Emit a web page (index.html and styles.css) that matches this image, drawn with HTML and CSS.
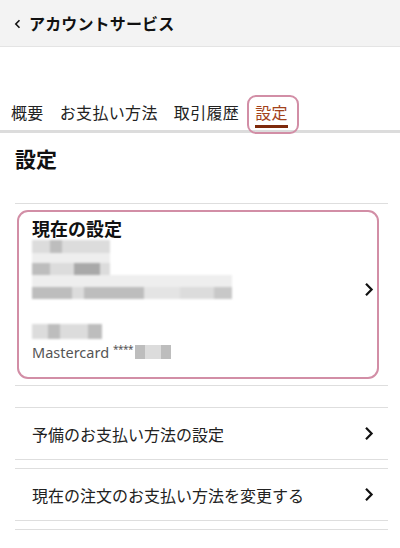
FILE: index.html
```html
<!DOCTYPE html>
<html lang="ja">
<head>
<meta charset="utf-8">
<link rel="stylesheet" href="styles.css">
</head>
<body>
<header class="topbar">
  <svg class="back" width="7" height="10" viewBox="0 0 7 10"><path d="M5.5 1.2 L1.8 5 L5.5 8.8" fill="none" stroke="#111" stroke-width="1.6"/></svg>
  <h1 class="title">アカウントサービス</h1>
</header>

<nav class="tabs">
  <span class="tab">概要</span>
  <span class="tab">お支払い方法</span>
  <span class="tab">取引履歴</span>
  <span class="tab active">設定</span>
</nav>

<h2 class="heading">設定</h2>

<div class="list">
  <section class="block card-block">
    <div class="card">
      <div class="card-body">
        <div class="card-title">現在の設定</div>
        <div class="mosaic">
          <div class="row r1"><span class="c l w18"></span><span class="c m w12"></span><span class="c l w48"></span></div>
          <div class="row r2"><span class="c v w78"></span></div>
          <div class="row r3"><span class="c m w18"></span><span class="c l w24"></span><span class="c d w26"></span><span class="c l w10"></span></div>
          <div class="row r4"><span class="c v w200"></span></div>
          <div class="row r5"><span class="c m w40"></span><span class="c l w12"></span><span class="c m w60"></span><span class="c l2 w36"></span><span class="c l w34"></span><span class="c m2 w18"></span></div>
          <div class="row r6"><span class="c l w16"></span><span class="c m w12"></span><span class="c l w28"></span><span class="c m w14"></span></div>
        </div>
        <div class="card-line">Mastercard <span class="stars">****</span><span class="mask"><span class="c m w10"></span><span class="c l w16"></span><span class="c m w10"></span></span></div>
      </div>
      <svg class="chev" width="10" height="15" viewBox="0 0 10 15"><path d="M2 1.8 L7.6 7.5 L2 13.2" fill="none" stroke="#111" stroke-width="2.2"/></svg>
    </div>
  </section>

  <section class="block item">
    <span class="item-text">予備のお支払い方法の設定</span>
    <svg class="chev" width="10" height="15" viewBox="0 0 10 15"><path d="M2 1.8 L7.6 7.5 L2 13.2" fill="none" stroke="#111" stroke-width="2.2"/></svg>
  </section>

  <section class="block item">
    <span class="item-text">現在の注文のお支払い方法を変更する</span>
    <svg class="chev" width="10" height="15" viewBox="0 0 10 15"><path d="M2 1.8 L7.6 7.5 L2 13.2" fill="none" stroke="#111" stroke-width="2.2"/></svg>
  </section>

  <section class="block item empty"></section>
</div>
</body>
</html>
```

FILE: styles.css
```css
* { box-sizing: border-box; }
html, body { margin: 0; padding: 0; }
body {
  width: 400px;
  height: 548px;
  overflow: hidden;
  background: #fff;
  color: #111;
  font-family: "Noto Sans CJK JP", "Noto Sans", sans-serif;
}

.topbar {
  height: 47px;
  background: #f3f3f3;
  border-bottom: 1px solid #e4e4e4;
  display: flex;
  align-items: center;
  padding-left: 14px;
}
.back { display: block; margin-top: 1px; }
.title {
  margin: 0 0 0 8px;
  font-size: 16px;
  font-weight: 700;
  line-height: 24px;
  letter-spacing: 0.15px;
}

.tabs {
  display: flex;
  gap: 16px;
  padding: 53px 12px 0 11px;
  border-bottom: 3px solid #dcdcdc;
}
.tab {
  position: relative;
  font-size: 16px;
  line-height: 24px;
  letter-spacing: 0.35px;
  padding-bottom: 6px;
  color: #222;
}
.tab.active { color: #a3421b; }
.tab.active::after {
  content: "";
  position: absolute;
  left: 0;
  right: 0;
  bottom: 2px;
  height: 3px;
  background: #7e2a0c;
}
.tab.active::before {
  content: "";
  position: absolute;
  left: -8px;
  right: -11px;
  top: -5px;
  bottom: -4px;
  border: 2px solid #d28ea6;
  border-radius: 9px;
}

.heading {
  margin: 10px 0 0 0;
  padding-left: 15px;
  font-size: 21px;
  font-weight: 700;
  line-height: 30px;
}

.list {
  padding: 0 12px 0 15px;
  margin-top: 30px;
}
.block {
  border-top: 1px solid #dedede;
  border-bottom: 1px solid #dedede;
}
.card-block {
  padding: 6px 9px 6px 2px;
}
.card {
  border: 2px solid #d28ea6;
  border-radius: 11px;
  display: flex;
  align-items: center;
  padding: 4px 3px 14px 13px;
}
.card-body { flex: 1; }
.card-title {
  font-size: 18px;
  font-weight: 700;
  line-height: 24px;
}
.mosaic { filter: blur(0.8px); margin-top: 0; }
.row { display: flex; }
.r1 { height: 13px; }
.r2 { height: 10px; }
.r3 { height: 12px; }
.r4 { height: 12px; }
.r5 { height: 12px; }
.r6 { height: 15px; margin-top: 25px; }
.c { display: block; height: 100%; }
.c.l { background: #dcdcdc; }
.c.l2 { background: #e4e4e4; }
.c.v { background: #eeeeee; }
.c.m { background: #bdbdbd; }
.c.m2 { background: #c8c8c8; }
.c.d { background: #a9a9a9; }
.w10 { width: 10px; } .w12 { width: 12px; } .w14 { width: 14px; } .w16 { width: 16px; }
.w18 { width: 18px; } .w24 { width: 24px; } .w26 { width: 26px; } .w28 { width: 28px; }
.w34 { width: 34px; } .w36 { width: 36px; } .w40 { width: 40px; } .w48 { width: 48px; }
.w60 { width: 60px; } .w78 { width: 78px; } .w200 { width: 200px; }

.card-line {
  font-family: "Noto Sans", "Noto Sans CJK JP", sans-serif;
  font-size: 14.5px;
  line-height: 22px;
  color: #555;
  display: flex;
  align-items: center;
  margin-top: 2px;
}
.stars {
  font-size: 10px;
  line-height: 10px;
  align-self: flex-start;
  margin-top: 3px;
  margin-left: 4px;
  letter-spacing: -0.5px;
}
.mask {
  display: flex;
  height: 14px;
  margin-left: 2px;
  filter: blur(0.5px);
}
.chev { display: block; flex: none; }

.item {
  margin-top: 21px;
  height: 53px;
  display: flex;
  align-items: center;
  justify-content: space-between;
  padding: 0 14px 0 17px;
}
.item + .item { margin-top: 8px; }
.item-text {
  font-size: 16px;
  line-height: 24px;
  color: #222;
}
.empty { height: 30px; }
```
